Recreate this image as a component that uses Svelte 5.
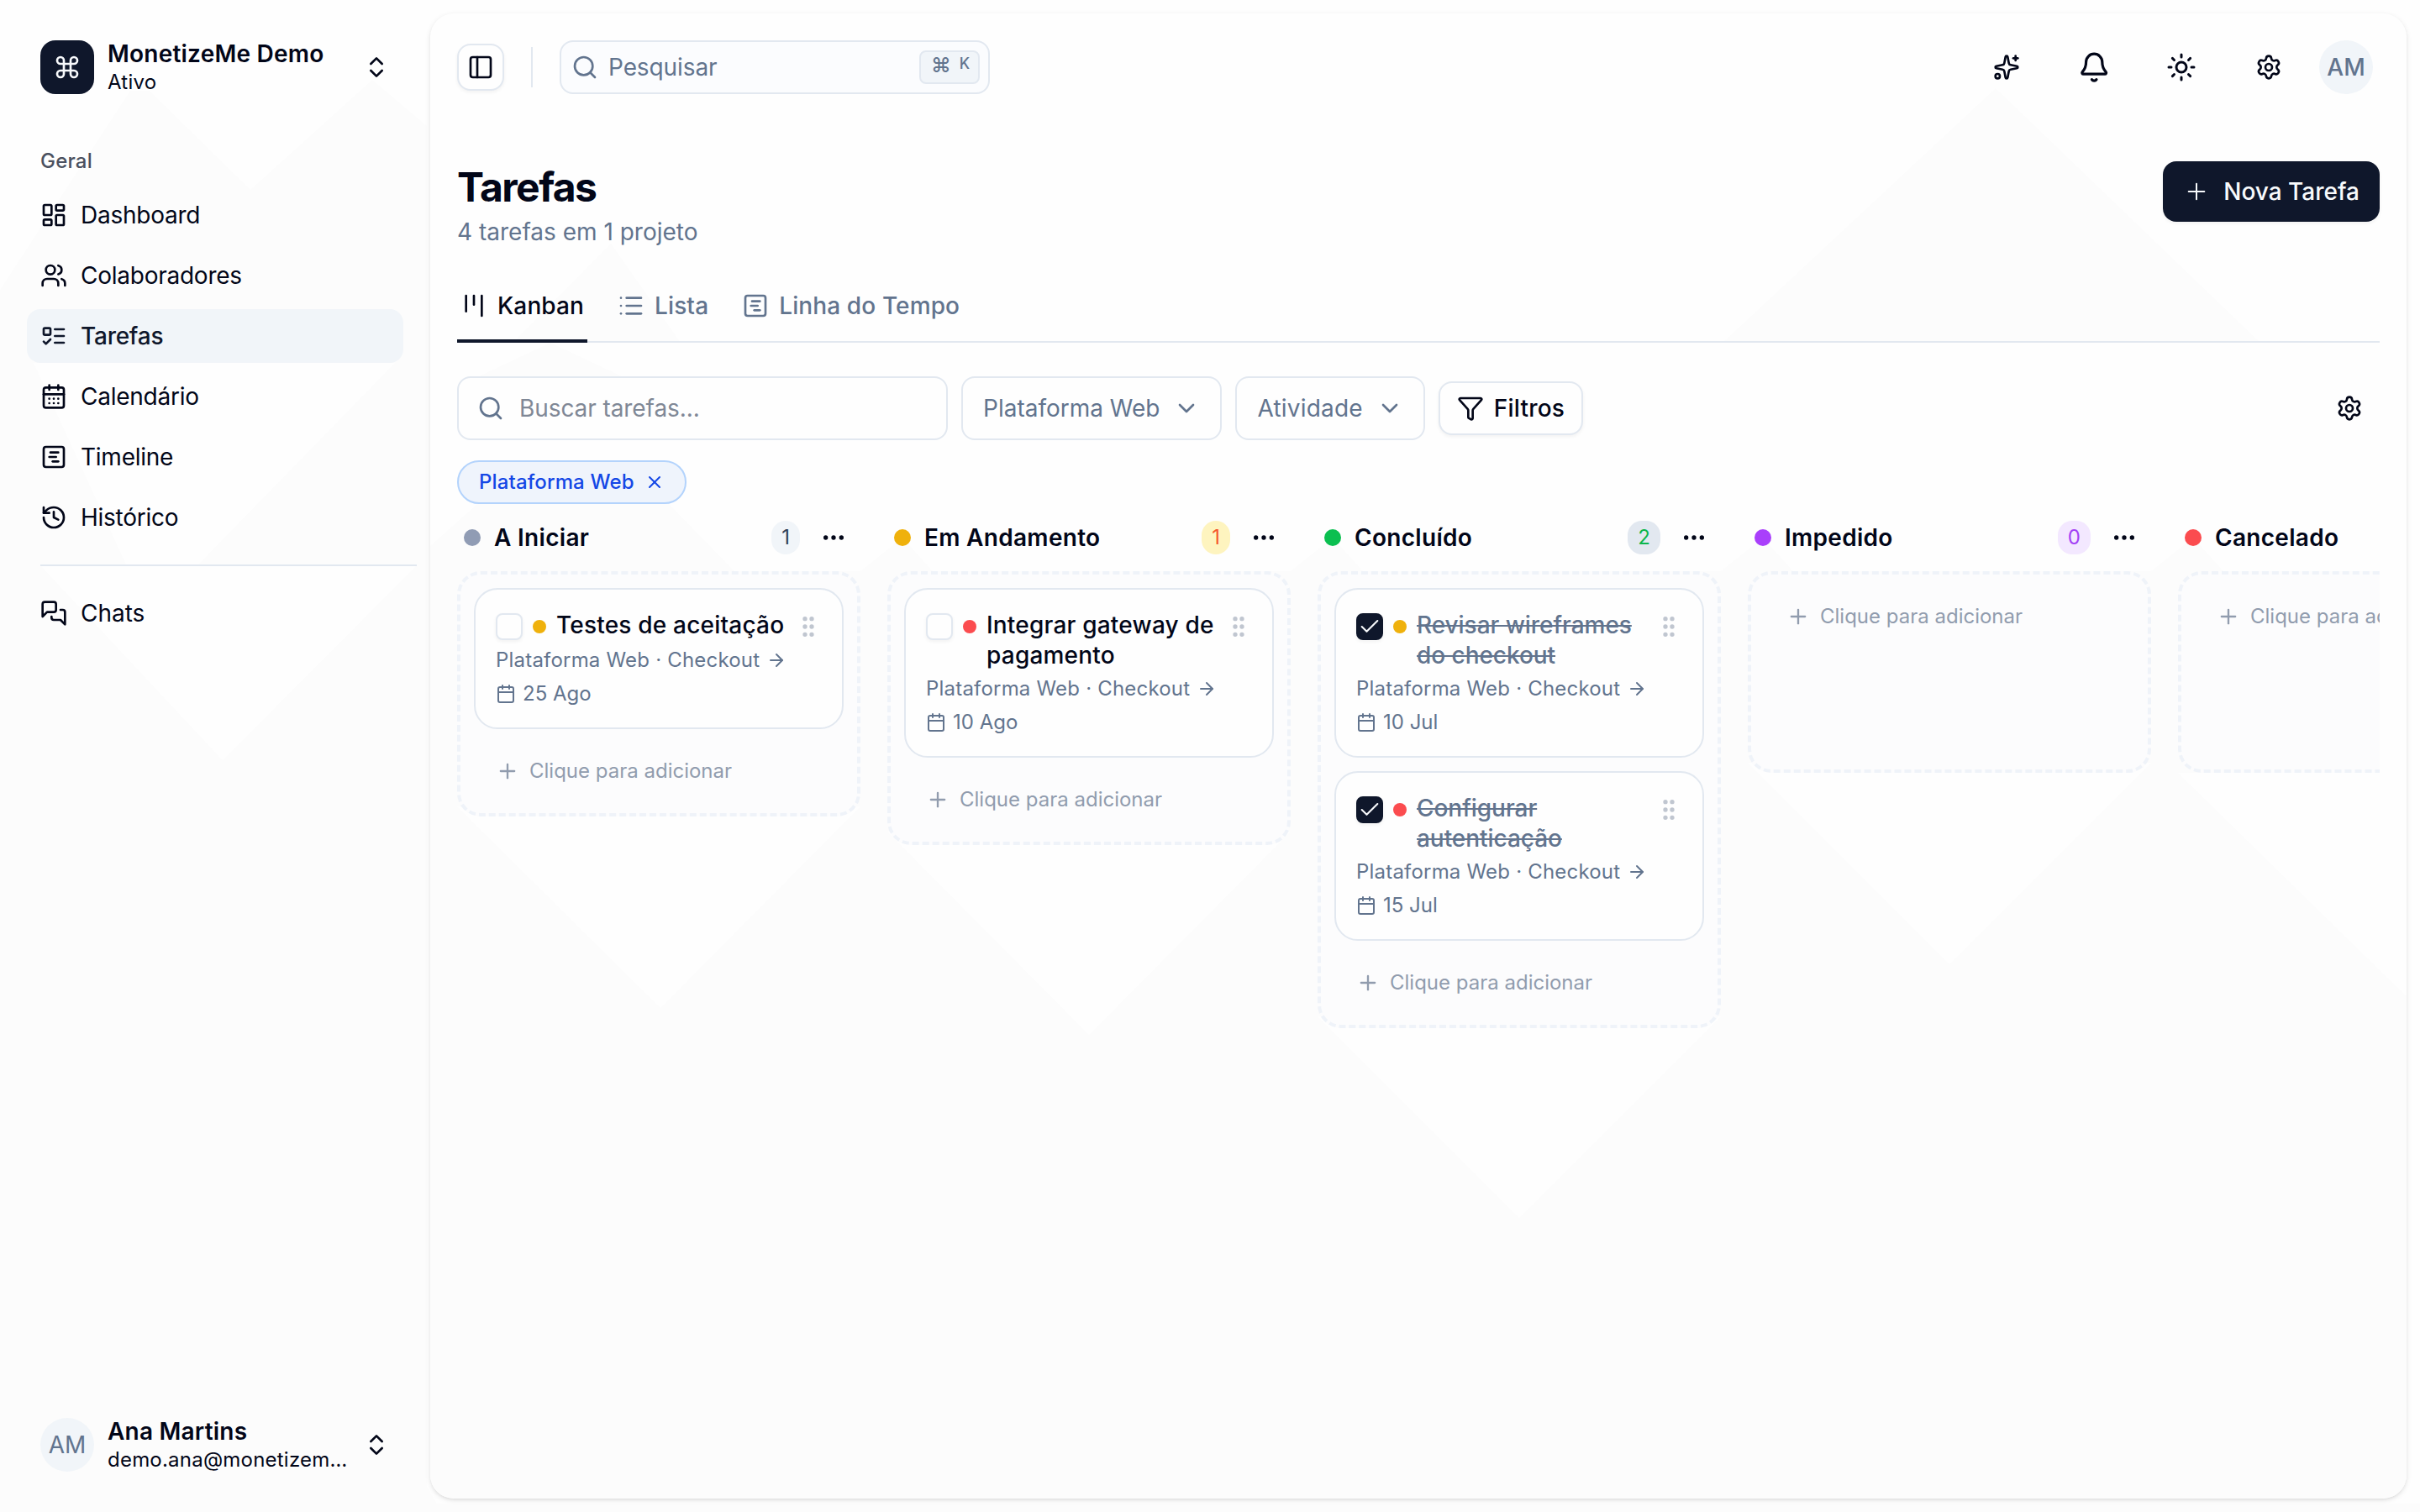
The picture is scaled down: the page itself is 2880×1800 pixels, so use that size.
<script>
  const I = {
    command: '<path d="M15 6v12a3 3 0 1 0 3-3H6a3 3 0 1 0 3 3V6a3 3 0 1 0-3 3h12a3 3 0 1 0-3-3"/>',
    updown: '<path d="m7 15 5 5 5-5"/><path d="m7 9 5-5 5 5"/>',
    dashboard: '<rect width="7" height="9" x="3" y="3" rx="1"/><rect width="7" height="5" x="14" y="3" rx="1"/><rect width="7" height="9" x="14" y="12" rx="1"/><rect width="7" height="5" x="3" y="16" rx="1"/>',
    users: '<path d="M16 21v-2a4 4 0 0 0-4-4H6a4 4 0 0 0-4 4v2"/><path d="M16 3.128a4 4 0 0 1 0 7.744"/><path d="M22 21v-2a4 4 0 0 0-3-3.87"/><circle cx="9" cy="7" r="4"/>',
    todo: '<rect x="3" y="5" width="6" height="6" rx="1"/><path d="m3 17 2 2 4-4"/><path d="M13 6h8"/><path d="M13 12h8"/><path d="M13 18h8"/>',
    calendarDays: '<path d="M8 2v4"/><path d="M16 2v4"/><rect width="18" height="18" x="3" y="4" rx="2"/><path d="M3 10h18"/><path d="M8 14h.01"/><path d="M12 14h.01"/><path d="M16 14h.01"/><path d="M8 18h.01"/><path d="M12 18h.01"/><path d="M16 18h.01"/>',
    gantt: '<rect width="18" height="18" x="3" y="3" rx="2"/><path d="M9 8h7"/><path d="M8 12h6"/><path d="M11 16h5"/>',
    history: '<path d="M3 12a9 9 0 1 0 9-9 9.75 9.75 0 0 0-6.74 2.74L3 8"/><path d="M3 3v5h5"/><path d="M12 7v5l4 2"/>',
    chats: '<path d="M14 9a2 2 0 0 1-2 2H6l-4 4V4a2 2 0 0 1 2-2h8a2 2 0 0 1 2 2z"/><path d="M18 9h2a2 2 0 0 1 2 2v11l-4-4h-6a2 2 0 0 1-2-2v-1"/>',
    panel: '<rect width="18" height="18" x="3" y="3" rx="2"/><path d="M9 3v18"/>',
    search: '<circle cx="11" cy="11" r="8"/><path d="m21 21-4.3-4.3"/>',
    sparkles: '<path d="M11.017 2.814a1 1 0 0 1 1.966 0l1.051 5.558a2 2 0 0 0 1.594 1.594l5.558 1.051a1 1 0 0 1 0 1.966l-5.558 1.051a2 2 0 0 0-1.594 1.594l-1.051 5.558a1 1 0 0 1-1.966 0l-1.051-5.558a2 2 0 0 0-1.594-1.594l-5.558-1.051a1 1 0 0 1 0-1.966l5.558-1.051a2 2 0 0 0 1.594-1.594z"/><path d="M20 2v4"/><path d="M22 4h-4"/><circle cx="4" cy="20" r="2"/>',
    bell: '<path d="M10.268 21a2 2 0 0 0 3.464 0"/><path d="M3.262 15.326A1 1 0 0 0 4 17h16a1 1 0 0 0 .74-1.673C19.41 13.956 18 12.499 18 8A6 6 0 0 0 6 8c0 4.499-1.411 5.956-2.738 7.326"/>',
    sun: '<circle cx="12" cy="12" r="4"/><path d="M12 2v2"/><path d="M12 20v2"/><path d="m4.93 4.93 1.41 1.41"/><path d="m17.66 17.66 1.41 1.41"/><path d="M2 12h2"/><path d="M20 12h2"/><path d="m6.34 17.66-1.41 1.41"/><path d="m19.07 4.93-1.41 1.41"/>',
    gear: '<path d="M9.671 4.136a2.34 2.34 0 0 1 4.659 0 2.34 2.34 0 0 0 3.319 1.915 2.34 2.34 0 0 1 2.33 4.033 2.34 2.34 0 0 0 0 3.831 2.34 2.34 0 0 1-2.33 4.033 2.34 2.34 0 0 0-3.319 1.915 2.34 2.34 0 0 1-4.659 0 2.34 2.34 0 0 0-3.32-1.915 2.34 2.34 0 0 1-2.33-4.033 2.34 2.34 0 0 0 0-3.831A2.34 2.34 0 0 1 6.35 6.051a2.34 2.34 0 0 0 3.319-1.915"/><circle cx="12" cy="12" r="3"/>',
    plus: '<path d="M5 12h14"/><path d="M12 5v14"/>',
    kanban: '<path d="M5 3v14"/><path d="M12 3v8"/><path d="M19 3v18"/>',
    list: '<path d="M3 5h.01"/><path d="M3 12h.01"/><path d="M3 19h.01"/><path d="M8 5h13"/><path d="M8 12h13"/><path d="M8 19h13"/>',
    chevron: '<path d="m6 9 6 6 6-6"/>',
    funnel: '<path d="M10 20a1 1 0 0 0 .553.895l2 1A1 1 0 0 0 14 21v-7a2 2 0 0 1 .517-1.341L21.74 4.67A1 1 0 0 0 21 3H3a1 1 0 0 0-.742 1.67l7.225 7.989A2 2 0 0 1 10 14z"/>',
    close: '<path d="M18 6 6 18"/><path d="m6 6 12 12"/>',
    dots: '<circle cx="12" cy="12" r="1"/><circle cx="19" cy="12" r="1"/><circle cx="5" cy="12" r="1"/>',
    grip: '<circle cx="9" cy="12" r="1"/><circle cx="9" cy="5" r="1"/><circle cx="9" cy="19" r="1"/><circle cx="15" cy="12" r="1"/><circle cx="15" cy="5" r="1"/><circle cx="15" cy="19" r="1"/>',
    arrow: '<path d="M5 12h14"/><path d="m12 5 7 7-7 7"/>',
    calendar: '<path d="M8 2v4"/><path d="M16 2v4"/><rect width="18" height="18" x="3" y="4" rx="2"/><path d="M3 10h18"/>',
    check: '<path d="M20 6 9 17l-5-5"/>'
  };

  const nav = [
    { label: 'Dashboard', icon: 'dashboard' },
    { label: 'Colaboradores', icon: 'users' },
    { label: 'Tarefas', icon: 'todo', active: true },
    { label: 'Calendário', icon: 'calendarDays' },
    { label: 'Timeline', icon: 'gantt' },
    { label: 'Histórico', icon: 'history' }
  ];

  const tabs = [
    { label: 'Kanban', icon: 'kanban', active: true },
    { label: 'Lista', icon: 'list' },
    { label: 'Linha do Tempo', icon: 'gantt' }
  ];

  const columns = [
    { title: 'A Iniciar', tone: 'slate', cards: [{ title: 'Testes de aceitação', date: '25 Ago', prio: 'amber' }] },
    { title: 'Em Andamento', tone: 'amber', cards: [{ title: 'Integrar gateway de pagamento', date: '10 Ago', prio: 'red' }] },
    {
      title: 'Concluído',
      tone: 'green',
      cards: [
        { title: 'Revisar wireframes do checkout', date: '10 Jul', prio: 'amber', done: true },
        { title: 'Configurar autenticação', date: '15 Jul', prio: 'red', done: true }
      ]
    },
    { title: 'Impedido', tone: 'purple', cards: [] },
    { title: 'Cancelado', tone: 'red', cards: [] }
  ];
</script>

{#snippet icon(name, cls = '')}
  <svg class="icon {cls}" viewBox="0 0 24 24">{@html I[name]}</svg>
{/snippet}

<div class="app">
  <!-- faint geometric backdrop behind the sidebar -->
  <svg class="facets" viewBox="0 0 2880 1800">
    <path d="M155 108L0 345V1800H2880V1790H520L508 1770V150L443 95L298 226L178 108z" />
    <path class="light" d="M40 432H470L236 672H150z" />
    <path class="light" d="M48 673L265 905L496 673z" />
  </svg>

  <aside>
    <div class="account">
      <span class="logo">{@render icon('command')}</span>
      <div class="who"><strong>MonetizeMe Demo</strong><span>Ativo</span></div>
      {@render icon('updown')}
    </div>
    <div class="group">Geral</div>
    <nav class="primary-nav">
      {#each nav as item}
        <a class:active={item.active}>{@render icon(item.icon)}<span>{item.label}</span></a>
      {/each}
    </nav>
    <hr />
    <nav><a>{@render icon('chats')}<span>Chats</span></a></nav>
    <div class="account footer">
      <span class="avatar">AM</span>
      <div class="who"><strong>Ana Martins</strong><span>demo.ana@monetizeme.com</span></div>
      {@render icon('updown')}
    </div>
  </aside>

  <main>
    <!-- the same backdrop, seen through the content panel -->
    <svg class="facets" viewBox="512 16 2352 1768">
      <path d="M2375 105L2050 408H2690z" />
      <path d="M727 290L610 408H810zM655 408L570 448H740z" />
      <path
        d="M512 650L568 600H796L874 680H1024L1074 640L1110 680H1536L1586 640L1622 680H2048L2098 640L2134 680H2560L2610 640L2646 680V920H2592L2832 1155L2864 1186V1784H512z"
      />
      <path class="light" d="M544 960H1024L786 1200z" />
      <path class="light" d="M1056 990H1536L1296 1232z" />
      <path class="light" d="M1568 1210H2048L1808 1450z" />
      <path class="light" d="M2080 908H2560L2320 1148z" />
    </svg>

    <header>
      <button class="toggle">{@render icon('panel')}</button>
      <i class="rule"></i>
      <div class="find">
        {@render icon('search')}<span>Pesquisar</span>
        <kbd><b>⌘</b>K</kbd>
      </div>
      <div class="actions">
        <span>{@render icon('sparkles')}</span>
        <span>{@render icon('bell', 'big')}</span>
        <span>{@render icon('sun', 'sun')}</span>
        <span>{@render icon('gear')}</span>
        <span class="avatar medium">AM</span>
      </div>
    </header>

    <section class="heading">
      <div>
        <h1>Tarefas</h1>
        <p>4 tarefas em 1 projeto</p>
      </div>
      <button class="primary">{@render icon('plus', 'thin')}Nova Tarefa</button>
    </section>

    <div class="tabs">
      {#each tabs as tab}
        <div class="tab" class:active={tab.active}>{@render icon(tab.icon)}{tab.label}</div>
      {/each}
    </div>

    <div class="filters">
      <div class="field query">{@render icon('search')}Buscar tarefas...</div>
      <div class="field">Plataforma Web{@render icon('chevron')}</div>
      <div class="field activity">Atividade{@render icon('chevron')}</div>
      <button class="filter">{@render icon('funnel')}Filtros</button>
      <span class="config">{@render icon('gear')}</span>
    </div>

    <div class="chips">
      <span class="chip">Plataforma Web{@render icon('close', 'small')}</span>
    </div>

    <div class="board">
      {#each columns as col}
        <section class="column">
          <div class="colhead">
            <i class="dot {col.tone}"></i>
            <h2>{col.title}</h2>
            <span class="count {col.tone}">{col.cards.length}</span>
            <span class="more">{@render icon('dots')}</span>
          </div>
          <div class="lane">
            {#each col.cards as card}
              <article>
                <div class="row">
                  <span class="box" class:done={card.done}>{#if card.done}{@render icon('check')}{/if}</span>
                  <i class="prio {card.prio}"></i>
                  <h3 class:done={card.done}>{card.title}</h3>
                  {@render icon('grip', 'grip')}
                </div>
                <div class="meta path">Plataforma Web · Checkout{@render icon('arrow', 'small')}</div>
                <div class="meta">{@render icon('calendar', 'small')}{card.date}</div>
              </article>
            {/each}
            <div class="add">{@render icon('plus', 'mid')}Clique para adicionar</div>
          </div>
        </section>
      {/each}
    </div>
  </main>
</div>

<style>
  :global(body) { background: #fefefe; }
  .app, .app * { box-sizing: border-box; }
  .app {
    position: relative;
    display: flex;
    width: 2880px;
    height: 1800px;
    overflow: hidden;
    background: #fefefe;
    color: #020618;
    font-family: Inter, "Liberation Sans", sans-serif;
    font-size: 28px;
    line-height: 40px;
  }
  .facets { position: absolute; inset: 0; width: 100%; height: 100%; fill: #fcfcfc; }
  .facets .light { fill: #fefefe; }
  h1, h2, h3, p { margin: 0; }
  button { font: inherit; color: inherit; padding: 0; }
  .icon {
    flex: none;
    width: 32px;
    height: 32px;
    fill: none;
    stroke: currentColor;
    stroke-width: 2;
    stroke-linecap: round;
    stroke-linejoin: round;
  }
  .icon.big { width: 38.4px; height: 38.4px; }
  .icon.sun { width: 36px; height: 36px; }
  .icon.mid { width: 28px; height: 28px; }
  .icon.small { width: 24px; height: 24px; }
  .icon.thin { stroke-width: 1.5; }

  aside {
    position: relative;
    display: flex;
    flex-direction: column;
    width: 512px;
    padding: 32px 16px 32px 32px;
  }
  .account { display: flex; align-items: center; gap: 16px; width: 448px; height: 96px; padding: 0 16px; }
  .footer { margin-top: auto; }
  .logo {
    display: grid;
    place-items: center;
    width: 64px;
    height: 64px;
    border-radius: 18px;
    background: #0f172b;
    color: #f8fafc;
  }
  .who { flex: 1; min-width: 0; display: grid; letter-spacing: 0.22px; }
  .who strong { font-weight: 600; line-height: 35px; }
  .who span { font-size: 24px; line-height: 32px; white-space: nowrap; overflow: hidden; text-overflow: ellipsis; }
  .avatar {
    display: grid;
    place-items: center;
    flex: none;
    width: 64px;
    height: 64px;
    border-radius: 50%;
    background: #f1f5f9;
    color: #62748e;
  }
  .medium { font-weight: 500; }
  .group {
    height: 64px;
    margin-top: 32px;
    padding-left: 16px;
    font-size: 24px;
    line-height: 64px;
    font-weight: 500;
    letter-spacing: 0.2px;
    color: #4b5160;
  }
  nav { display: flex; flex-direction: column; gap: 8px; }
  .primary-nav { letter-spacing: -0.25px; }
  nav a { display: flex; align-items: center; gap: 16px; width: 448px; height: 64px; padding: 0 16px; border-radius: 16px; }
  nav a.active { background: #f1f5f9; color: #0f172b; font-weight: 500; }
  hr { width: 448px; height: 2px; margin: 24px 0 24px 16px; border: 0; background: #e2e8f0; }

  main {
    position: relative;
    width: 2352px;
    margin: 16px 0;
    padding: 0 32px;
    overflow: hidden;
    border-radius: 28px;
    background: #fefefe;
    box-shadow: 0 2px 6px rgba(0, 0, 0, 0.1), 0 2px 4px -2px rgba(0, 0, 0, 0.1);
  }
  main > :not(.facets) { position: relative; }
  header { display: flex; align-items: center; height: 128px; }
  .toggle {
    display: grid;
    place-items: center;
    width: 56px;
    height: 56px;
    border: 2px solid #e2e8f0;
    border-radius: 16px;
    background: #fefefe;
    box-shadow: 0 2px 4px rgba(0, 0, 0, 0.05);
  }
  .rule { width: 2px; height: 48px; margin: 0 32px; background: #e2e8f0; }
  .find {
    display: flex;
    align-items: center;
    gap: 12px;
    width: 512px;
    height: 64px;
    padding: 0 10px 0 12px;
    border: 2px solid #e2e8f0;
    border-radius: 16px;
    background: #fbfcfe;
    color: #62748e;
    letter-spacing: -0.1px;
  }
  kbd {
    display: flex;
    gap: 10px;
    width: 72px;
    height: 40px;
    margin-left: auto;
    padding: 0 12px;
    border: 2px solid #e2e8f0;
    border-radius: 8px;
    background: #f1f5f9;
    font: 500 18px/28px Inter, sans-serif;
  }
  kbd b { font-size: 24px; line-height: 31px; font-weight: 500; }
  .actions { display: flex; align-items: center; margin: 0 8px 0 auto; gap: 32px; }
  .actions span:not(.avatar) { display: grid; place-items: center; width: 74px; height: 72px; margin-right: -1px; margin-left: -1px; }
  .actions .avatar { margin-left: -8px; }

  .heading { display: flex; justify-content: space-between; align-items: flex-start; padding-top: 48px; }
  h1 { margin: -1px 0 1px; font-size: 48px; line-height: 64px; font-weight: 700; letter-spacing: -1.55px; }
  .heading p { color: #62748e; }
  .primary {
    display: flex;
    align-items: center;
    gap: 16px;
    height: 72px;
    padding: 0 24px;
    border: 0;
    border-radius: 16px;
    background: #0f172b;
    color: #f8fafc;
    font-weight: 500;
    box-shadow: 0 2px 4px rgba(0, 0, 0, 0.05);
  }
  .tabs {
    display: flex;
    gap: 32px;
    height: 88px;
    margin-top: 24px;
    border-bottom: 2px solid #e2e8f0;
    color: #62748e;
    font-weight: 500;
    letter-spacing: 0.12px;
  }
  .tab { display: flex; align-items: center; gap: 12px; height: 88px; padding: 4px 4px 0; border-bottom: 4px solid transparent; }
  .tab.active { color: #020618; border-color: #0f172b; }

  .filters { display: flex; align-items: center; gap: 16px; margin-top: 40px; height: 76px; }
  .field {
    display: flex;
    align-items: center;
    gap: 16px;
    height: 76px;
    padding: 0 24px;
    border: 2px solid #e2e8f0;
    border-radius: 16px;
    background: #fefefe;
    color: #62748e;
  }
  .activity { letter-spacing: 0.2px; }
  .query { width: 584px; gap: 18px; padding: 0 22px; color: #808896; letter-spacing: -0.08px; }
  .query :global(svg) { color: #62748e; }
  .filter {
    display: flex;
    align-items: center;
    gap: 12px;
    height: 64px;
    padding: 0 20px;
    border: 2px solid #e2e8f0;
    border-radius: 16px;
    background: #fefefe;
    font-weight: 500;
    letter-spacing: 0.2px;
    box-shadow: 0 2px 4px rgba(0, 0, 0, 0.05);
  }
  .config { display: grid; margin: 0 20px 0 auto; }
  .chips { display: flex; margin-top: 24px; }
  .chip {
    display: flex;
    align-items: center;
    gap: 12px;
    height: 52px;
    padding: 0 24px;
    border: 2px solid #b3d3fc;
    border-radius: 26px;
    background: #eff4fc;
    color: #1447e6;
    font-size: 24px;
    font-weight: 500;
    letter-spacing: 0.14px;
  }

  .board { display: flex; align-items: flex-start; gap: 32px; margin-top: 8px; overflow: hidden; }
  .column { flex: none; width: 480px; }
  .colhead { display: flex; align-items: center; height: 64px; padding-left: 8px; }
  .dot { width: 20px; height: 20px; margin-right: 16px; border-radius: 50%; }
  .dot.slate { background: #909cb4; }
  .dot.amber, .prio.amber { background: #efb10c; }
  .dot.green { background: #0bbf50; }
  .dot.purple { background: #a93ffb; }
  .dot.red, .prio.red { background: #fb4c4f; }
  h2 { flex: 1; font-size: 28px; font-weight: 600; letter-spacing: 0.3px; }
  .count { height: 40px; padding: 0 12px; border-radius: 17px; font-size: 24px; line-height: 39px; }
  .count.slate { background: #f1f5f9; color: #314158; }
  .count.amber { background: #fef4bf; color: #f5572b; }
  .count.green { background: #e2e8f0; color: #0bb64c; }
  .count.purple { background: #f3e8ff; color: #a341f5; }
  .count.red { background: #ffe2e2; color: #fb2c36; }
  .more { display: grid; place-items: center; width: 64px; height: 64px; margin-left: 8px; }
  .lane {
    display: flex;
    flex-direction: column;
    gap: 16px;
    min-height: 240px;
    margin-top: 8px;
    padding: 16px;
    border: 4px dashed #eff3f9;
    border-radius: 28px;
    background: #fcfcfd;
  }
  article {
    display: flex;
    flex-direction: column;
    gap: 8px;
    padding: 24px;
    border: 2px solid #e2e8f0;
    border-radius: 28px;
    background: #fefefe;
  }
  .row { display: flex; align-items: flex-start; gap: 12px; }
  .box {
    display: grid;
    place-items: center;
    width: 32px;
    height: 32px;
    margin-top: 4px;
    border: 2px solid #e2e8f0;
    border-radius: 8px;
    background: #fefefe;
    box-shadow: 0 2px 4px rgba(0, 0, 0, 0.05);
  }
  .box.done { border-color: #0f172b; background: #0f172b; color: #f8fafc; }
  .box :global(svg) { width: 28px; height: 28px; stroke-width: 1.8; }
  .prio { flex: none; width: 16px; height: 16px; margin-top: 12px; border-radius: 50%; }
  h3 { flex: 1; margin-bottom: -2px; font-size: 28px; line-height: 36px; font-weight: 500; letter-spacing: 0.2px; }
  h3.done { color: #62748e; text-decoration: line-through; letter-spacing: -0.05px; }
  .row :global(.grip) { margin-top: 4px; color: #c0c6d0; }
  .meta { display: flex; align-items: center; gap: 8px; font-size: 24px; line-height: 32px; color: #62748e; }
  .path { letter-spacing: 0.2px; }
  .add { display: flex; align-items: center; gap: 12px; height: 68px; padding: 0 26px; font-size: 24px; color: #919cae; }
</style>
